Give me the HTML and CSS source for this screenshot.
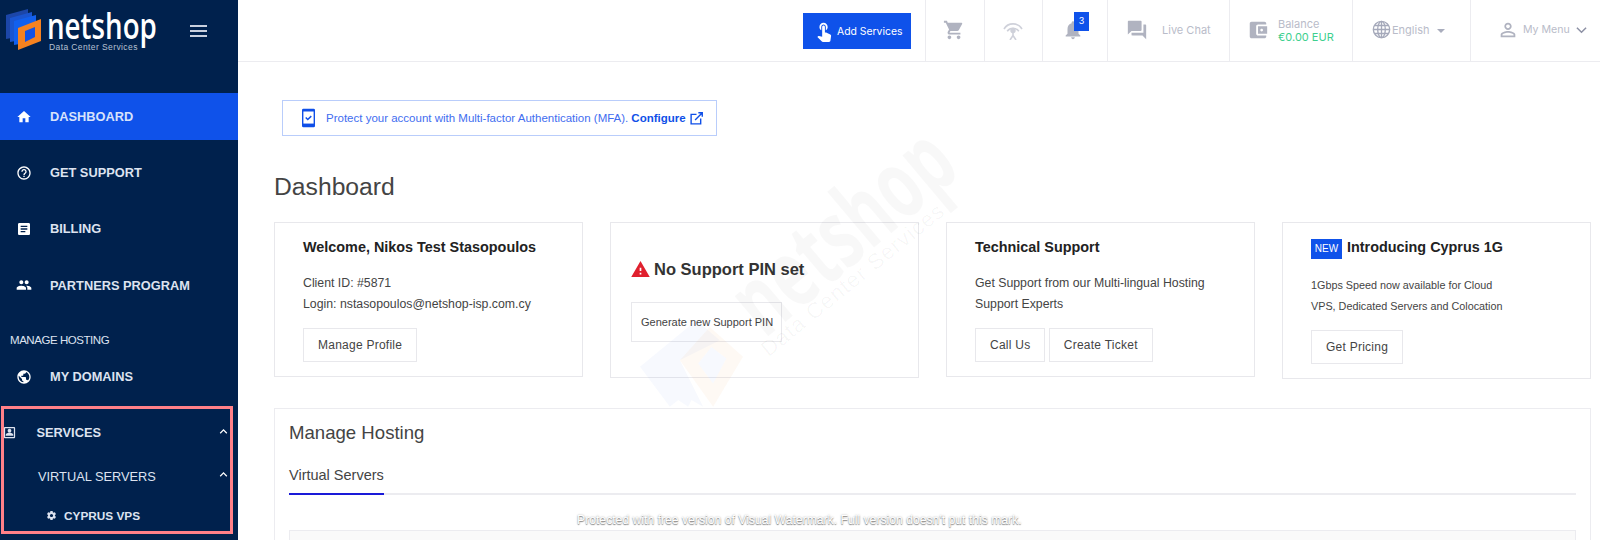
FILE: index.html
```html
<!DOCTYPE html>
<html lang="en">
<head>
    <meta charset="UTF-8">
    <meta name="viewport" content="width=device-width, initial-scale=1.0">
    <title>Dashboard</title>
    <link rel="stylesheet" href="styles.css">
</head>
<body>
    <div class="app">
        <aside class="sidebar">
            <div class="brand">
                <div class="logo">
                    <svg class="logo-mark" viewBox="0 0 36 42" width="36" height="42">
                        <polygon points="0,6 22,0 22,26 0,30" fill="#1c46a8"/>
                        <polygon points="4,9 26,3 26,29 4,33" fill="#1a55d0"/>
                        <polygon points="8,12 30,6 30,32 8,36" fill="#1260ee"/>
                        <polygon points="12,19 35,10 35,32 12,41" fill="#f58220"/>
                        <polygon points="19,22 29,18 29,28 19,33" fill="#1052e6"/>
                    </svg>
                    <div class="logo-text">
                        <div class="logo-name">netshop</div>
                        <div class="logo-sub">Data Center Services</div>
                    </div>
                </div>
                <div class="burger"><span></span><span></span><span></span></div>
            </div>
            <nav class="nav">
                <a class="nav-item active">
                    <svg class="nav-icon" viewBox="0 0 24 24"><path d="M10 20v-6h4v6h5v-8h3L12 3 2 12h3v8z"/></svg>DASHBOARD
                </a>
                <a class="nav-item">
                    <svg class="nav-icon" viewBox="0 0 24 24"><path d="M11 18h2v-2h-2v2zm1-16C6.48 2 2 6.48 2 12s4.48 10 10 10 10-4.48 10-10S17.52 2 12 2zm0 18c-4.41 0-8-3.59-8-8s3.59-8 8-8 8 3.59 8 8-3.59 8-8 8zm0-14c-2.21 0-4 1.79-4 4h2c0-1.1.9-2 2-2s2 .9 2 2c0 2-3 1.75-3 5h2c0-2.25 3-2.5 3-5 0-2.21-1.79-4-4-4z"/></svg>GET SUPPORT
                </a>
                <a class="nav-item">
                    <svg class="nav-icon" viewBox="0 0 24 24"><path d="M19 3H5c-1.1 0-2 .9-2 2v14c0 1.1.9 2 2 2h14c1.1 0 2-.9 2-2V5c0-1.1-.9-2-2-2zm-5 14H7v-2h7v2zm3-4H7v-2h10v2zm0-4H7V7h10v2z"/></svg>BILLING
                </a>
                <a class="nav-item">
                    <svg class="nav-icon" viewBox="0 0 24 24"><path d="M16 11c1.66 0 2.99-1.34 2.99-3S17.66 5 16 5c-1.66 0-3 1.34-3 3s1.34 3 3 3zm-8 0c1.66 0 2.99-1.34 2.99-3S9.66 5 8 5C6.34 5 5 6.34 5 8s1.34 3 3 3zm0 2c-2.33 0-7 1.17-7 3.5V19h14v-2.5c0-2.33-4.67-3.5-7-3.5zm8 0c-.29 0-.62.02-.97.05 1.16.84 1.97 1.97 1.97 3.45V19h6v-2.5c0-2.33-4.67-3.5-7-3.5z"/></svg>PARTNERS PROGRAM
                </a>
                <div class="nav-label">MANAGE HOSTING</div>
                <a class="nav-item nav-item-short">
                    <svg class="nav-icon" viewBox="0 0 24 24"><path d="M12 2C6.48 2 2 6.48 2 12s4.48 10 10 10 10-4.48 10-10S17.52 2 12 2zm-1 17.93c-3.95-.49-7-3.85-7-7.93 0-.62.08-1.21.21-1.79L9 15v1c0 1.1.9 2 2 2v1.93zm6.9-2.54c-.26-.81-1-1.39-1.9-1.39h-1v-3c0-.55-.45-1-1-1H8v-2h2c.55 0 1-.45 1-1V7h2c1.1 0 2-.9 2-2v-.41c2.93 1.19 5 4.06 5 7.41 0 2.08-.8 3.97-2.1 5.39z"/></svg>MY DOMAINS
                </a>
                <div class="nav-box">
                    <a class="box-row box-services">
                        <svg class="box-icon" viewBox="0 0 24 24"><path d="M19 3H5c-1.1 0-2 .9-2 2v14c0 1.1.9 2 2 2h14c1.1 0 2-.9 2-2V5c0-1.1-.9-2-2-2zm0 16H5V5h14v14zM12 12c1.65 0 3-1.35 3-3s-1.35-3-3-3-3 1.35-3 3 1.35 3 3 3zM6 17h12v-1.5c0-2-4-3-6-3s-6 1-6 3z"/></svg>
                        <span class="box-text">SERVICES</span>
                        <svg class="chevron" viewBox="0 0 24 24"><path d="M12 8l-6 6 1.41 1.41L12 10.83l4.59 4.58L18 14z"/></svg>
                    </a>
                    <a class="box-row box-virtual">
                        <span class="box-text">VIRTUAL SERVERS</span>
                        <svg class="chevron" viewBox="0 0 24 24"><path d="M12 8l-6 6 1.41 1.41L12 10.83l4.59 4.58L18 14z"/></svg>
                    </a>
                    <a class="box-row box-cyprus">
                        <svg class="gear" viewBox="0 0 24 24"><path d="M19.43 12.98c.04-.32.07-.64.07-.98s-.03-.66-.07-.98l2.11-1.65c.19-.15.24-.42.12-.64l-2-3.46c-.12-.22-.39-.3-.61-.22l-2.49 1c-.52-.4-1.08-.73-1.69-.98l-.38-2.65C14.46 2.18 14.25 2 14 2h-4c-.25 0-.46.18-.49.42l-.38 2.65c-.61.25-1.17.59-1.69.98l-2.49-1c-.23-.09-.49 0-.61.22l-2 3.46c-.13.22-.07.49.12.64l2.11 1.65c-.04.32-.07.65-.07.98s.03.66.07.98l-2.11 1.65c-.19.15-.24.42-.12.64l2 3.46c.12.22.39.3.61.22l2.49-1c.52.4 1.08.73 1.69.98l.38 2.65c.03.24.24.42.49.42h4c.25 0 .46-.18.49-.42l.38-2.65c.61-.25 1.17-.59 1.69-.98l2.49 1c.23.09.49 0 .61-.22l2-3.46c.12-.22.07-.49-.12-.64l-2.11-1.65zM12 15.5c-1.93 0-3.5-1.57-3.5-3.5s1.57-3.5 3.5-3.5 3.5 1.57 3.5 3.5-1.57 3.5-3.5 3.5z"/></svg>
                        <span>CYPRUS VPS</span>
                    </a>
                </div>
            </nav>
        </aside>

        <div class="main">
            <header class="topbar">
                <a class="btn-add">
                    <svg class="add-icon" viewBox="0 0 24 24"><path d="M9 11.24V7.5C9 6.12 10.12 5 11.5 5S14 6.12 14 7.5v3.74c1.21-.81 2-2.18 2-3.74C16 5.01 13.99 3 11.5 3S7 5.01 7 7.5c0 1.56.79 2.93 2 3.74zm9.84 4.63l-4.54-2.26c-.17-.07-.35-.11-.54-.11H13v-6c0-.83-.67-1.5-1.5-1.5S10 6.67 10 7.5v10.74l-3.43-.72c-.08-.01-.15-.03-.24-.03-.31 0-.59.13-.79.33l-.79.8 4.94 4.94c.27.27.65.44 1.06.44h6.79c.75 0 1.33-.55 1.44-1.28l.75-5.27c.01-.07.02-.14.02-.2 0-.62-.38-1.16-.91-1.38z"/></svg>
                    Add Services
                </a>
                <div class="top-item top-cart">
                    <svg class="top-icon" viewBox="0 0 24 24"><path d="M7 18c-1.1 0-1.99.9-1.99 2S5.9 22 7 22s2-.9 2-2-.9-2-2-2zM1 2v2h2l3.6 7.59-1.35 2.45c-.16.28-.25.61-.25.96 0 1.1.9 2 2 2h12v-2H7.42c-.14 0-.25-.11-.25-.25l.03-.12.9-1.63h7.45c.75 0 1.41-.41 1.75-1.03l3.58-6.49c.08-.14.12-.31.12-.48 0-.55-.45-1-1-1H5.21l-.94-2H1zm16 16c-1.1 0-1.99.9-1.99 2s.89 2 1.99 2 2-.9 2-2-.9-2-2-2z"/></svg>
                </div>
                <div class="top-item top-signal">
                    <svg class="signal-icon" viewBox="0 0 20 20" fill="none" stroke="#cfd1da" stroke-width="1.6">
                        <path d="M1 9A10.5 10.5 0 0 1 19 9"/>
                        <path d="M4.2 11.2A7.2 7.2 0 0 1 15.8 11.2"/>
                        <circle cx="10" cy="10.5" r="1.9" fill="#cfd1da"/>
                        <path d="M10 12.5v3M7 20l3-4.5 3 4.5"/>
                    </svg>
                </div>
                <div class="top-item top-bell">
                    <svg class="top-icon" viewBox="0 0 24 24"><path d="M12 22c1.1 0 2-.9 2-2h-4c0 1.1.89 2 2 2zm6-6v-5c0-3.07-1.64-5.64-4.5-6.32V4c0-.83-.67-1.5-1.5-1.5s-1.5.67-1.5 1.5v.68C7.63 5.36 6 7.92 6 11v5l-2 2v1h16v-1l-2-2z"/></svg>
                    <span class="badge">3</span>
                </div>
                <div class="top-item top-chat">
                    <svg class="top-icon" viewBox="0 0 24 24"><path d="M21 6h-2v9H6v2c0 .55.45 1 1 1h11l4 4V7c0-.55-.45-1-1-1zm-4 6V3c0-.55-.45-1-1-1H3c-.55 0-1 .45-1 1v14l4-4h10c.55 0 1-.45 1-1z"/></svg>
                    <span class="top-text">Live Chat</span>
                </div>
                <div class="top-item top-balance">
                    <svg class="top-icon" viewBox="0 0 24 24"><path d="M21 18v1c0 1.1-.9 2-2 2H5c-1.11 0-2-.9-2-2V5c0-1.1.89-2 2-2h14c1.1 0 2 .9 2 2v1h-9c-1.11 0-2 .9-2 2v8c0 1.1.89 2 2 2h9zm-9-2h10V8H12v8zm4-2.5c-.83 0-1.5-.67-1.5-1.5s.67-1.5 1.5-1.5 1.5.67 1.5 1.5-.67 1.5-1.5 1.5z"/></svg>
                    <div class="balance-text">
                        <div class="top-text">Balance</div>
                        <div class="balance-value">€0.00 EUR</div>
                    </div>
                </div>
                <div class="top-item top-lang">
                    <svg class="globe" viewBox="0 0 20 20" fill="none" stroke="#a5a9ba" stroke-width="1.4">
                        <circle cx="10" cy="10" r="8.6"/>
                        <ellipse cx="10" cy="10" rx="4" ry="8.6"/>
                        <path d="M10 1.4v17.2M1.4 10h17.2M2.6 5.8h14.8M2.6 14.2h14.8"/>
                    </svg>
                    <span class="top-text">English</span>
                    <span class="caret"></span>
                </div>
                <div class="top-item top-menu">
                    <svg class="top-icon" viewBox="0 0 24 24"><path d="M12 5.9c1.16 0 2.1.94 2.1 2.1s-.94 2.1-2.1 2.1S9.9 9.16 9.9 8s.94-2.1 2.1-2.1m0 9c2.97 0 6.1 1.46 6.1 2.1v1.1H5.9V17c0-.64 3.13-2.1 6.1-2.1M12 4C9.79 4 8 5.79 8 8s1.79 4 4 4 4-1.79 4-4-1.79-4-4-4zm0 9c-2.67 0-8 1.34-8 4v3h16v-3c0-2.66-5.33-4-8-4z"/></svg>
                    <span class="top-text">My Menu</span>
                    <svg class="menu-chevron" viewBox="0 0 12 8" fill="none" stroke="#8d91a5" stroke-width="1.6"><path d="M1 1.5l5 5 5-5"/></svg>
                </div>
            </header>

            <div class="content">
                <div class="alert">
                    <svg class="alert-icon" viewBox="0 0 14 20">
                        <rect width="14" height="20" rx="1.5" fill="#0f4fe8"/>
                        <rect x="1.5" y="3" width="11" height="13" fill="#fff"/>
                        <path d="M4 9.5l2.2 2.2L10 8" fill="none" stroke="#0f4fe8" stroke-width="1.6"/>
                    </svg>
                    <span>Protect your account with Multi-factor Authentication (MFA).</span>
                    <b class="alert-link">Configure</b>
                    <svg class="ext-icon" viewBox="0 0 14 14" fill="none" stroke="#0f4fe8" stroke-width="1.5">
                        <path d="M7 2.5H1.2v10.3h10.3V7"/>
                        <path d="M5.5 8.5L13 1M9 .8h4.2V5"/>
                    </svg>
                </div>

                <h1 class="page-title">Dashboard</h1>

                <div class="cards">
                    <div class="card">
                        <h3 class="card-title">Welcome, Nikos Test Stasopoulos</h3>
                        <p class="card-text">Client ID: #5871<br>Login: nstasopoulos@netshop-isp.com.cy</p>
                        <a class="btn">Manage Profile</a>
                    </div>
                    <div class="card card-pin">
                        <h3 class="card-title pin-title">
                            <svg class="warn-icon" viewBox="1 2 22 19"><path d="M1 21h22L12 2 1 21zm12-3h-2v-2h2v2zm0-4h-2v-4h2v4z"/></svg>
                            No Support PIN set
                        </h3>
                        <a class="btn btn-pin">Generate new Support PIN</a>
                    </div>
                    <div class="card">
                        <h3 class="card-title">Technical Support</h3>
                        <p class="card-text">Get Support from our Multi-lingual Hosting<br>Support Experts</p>
                        <a class="btn">Call Us</a>
                        <a class="btn">Create Ticket</a>
                    </div>
                    <div class="card">
                        <h3 class="card-title"><span class="tag">NEW</span> Introducing Cyprus 1G</h3>
                        <p class="card-text card-text-small">1Gbps Speed now available for Cloud<br>VPS, Dedicated Servers and Colocation</p>
                        <a class="btn">Get Pricing</a>
                    </div>
                </div>

                <section class="panel">
                    <h2 class="panel-title">Manage Hosting</h2>
                    <div class="tabs"><span class="tab">Virtual Servers</span></div>
                    <div class="panel-box"></div>
                </section>
            </div>

            <div class="wm">
                <div class="wm-name">netshop</div>
                <div class="wm-sub">Data Center Services</div>
                <svg class="wm-logo" viewBox="60 600 310 260">
                    <polygon points="60,740 230,600 300,660 180,720 250,860 215,840 205,860 175,840 150,860" fill="#3a6cf0" opacity=".045"/>
                    <path d="M180 720L270 620 370 710 280 860zM235 730L280 790 320 715 275 680z" fill="#f58220" fill-rule="evenodd" opacity=".05"/>
                    <polygon points="235,730 275,680 320,715 280,790" fill="#3a6cf0" opacity=".04"/>
                </svg>
            </div>
            <div class="free-mark">Protected with free version of Visual Watermark. Full version doesn't put this mark.</div>
        </div>
    </div>
</body>
</html>
```

FILE: styles.css
```css
* {box-sizing: border-box;}
body {
    margin: 0;
    padding: 0;
    font-family: "Liberation Sans", Arial, sans-serif;
    font-size: 12px;
    color: #333;
    background: #fff;
}
.app {
    display: flex;
    height: 540px;
    overflow: hidden;
}

/* sidebar */
.sidebar {
    width: 238px;
    flex: none;
    background-color: #00214d;
}
.brand {
    height: 93px;
    display: flex;
    align-items: flex-start;
    padding: 9px 0 0 6px;
}
.logo {
    display: flex;
    width: 184px;
}
.logo-mark {
    flex: none;
}
.logo-text {
    margin-left: 5px;
}
.logo-name {
    font-family: "Open Sans", sans-serif;
    font-size: 36px;
    font-weight: 600;
    line-height: 34px;
    color: #fff;
    transform: scaleX(.77);
    transform-origin: left;
}
.logo-sub {
    font-size: 8.5px;
    line-height: 8px;
    letter-spacing: .4px;
    color: #b7c2d3;
    margin-left: 2px;
}
.burger {
    width: 17px;
    margin-top: 16px;
}
.burger span {
    display: block;
    height: 2px;
    background-color: #c9d0de;
    margin-bottom: 3px;
}
.nav-item {
    display: flex;
    align-items: center;
    height: 47px;
    margin-bottom: 9.2px;
    padding-left: 16px;
    font-size: 12.8px;
    font-weight: bold;
    color: #dde3f0;
}
.nav-item.active {
    background-color: #0f52ea;
    color: #d8e2fb;
}
.nav-item-short {
    height: 40px;
    margin-bottom: 9px;
}
.nav-icon {
    width: 16px;
    height: 16px;
    fill: #fff;
    margin-right: 18px;
}
.nav-label {
    height: 22px;
    line-height: 22px;
    margin: 20px 0 6px 10px;
    font-size: 11.5px;
    letter-spacing: -.45px;
    color: #dde3f0;
}
.nav-box {
    width: 232px;
    height: 128px;
    margin-left: 1px;
    border: 3px solid #ff8088;
    color: #dde3f0;
}
.box-row {
    display: flex;
    align-items: center;
}
.box-services {
    height: 42px;
    margin-top: 3px;
    font-size: 12.8px;
    font-weight: bold;
}
.box-icon {
    width: 15px;
    height: 15px;
    fill: #dde3f0;
    margin: 0 19.5px 0 -2px;
}
.box-text {
    flex: 1;
}
.chevron {
    width: 15px;
    height: 15px;
    fill: #fff;
    margin-right: -1px;
    margin-top: -3px;
}
.box-virtual {
    height: 45px;
    padding-left: 34px;
    font-size: 12.8px;
}
.box-cyprus {
    height: 34px;
    padding-left: 42px;
    font-size: 11.8px;
    font-weight: bold;
}
.gear {
    width: 11px;
    height: 11px;
    fill: #dde3f0;
    margin-right: 7px;
}

/* top bar */
.main {
    flex: 1;
    position: relative;
    min-width: 0;
}
.topbar {
    display: flex;
    justify-content: flex-end;
    height: 62px;
    border-bottom: 1px solid #ececf0;
}
.btn-add {
    display: flex;
    align-items: center;
    align-self: flex-start;
    width: 108px;
    height: 36px;
    margin: 13px 14px 0 0;
    padding-left: 10px;
    background-color: #0f52ea;
    font-family: Inter, sans-serif;
    font-size: 10.4px;
    color: #fff;
}
.add-icon {
    width: 22px;
    height: 22px;
    fill: #fff;
    margin-right: 2px;
}
.top-item {
    position: relative;
    display: flex;
    align-items: center;
    padding-bottom: 2px;
    border-left: 1px solid #ececf0;
    font-family: Inter, sans-serif;
    font-size: 11px;
}
.top-icon {
    width: 22px;
    height: 22px;
    fill: #b0b3c0;
    flex: none;
}
.top-text {
    color: #b9bcc9;
}
.top-cart {
    width: 59px;
    padding-left: 17px;
}
.top-signal {
    width: 58px;
    padding-left: 18px;
}
.signal-icon {
    width: 20px;
    height: 20px;
}
.top-bell {
    width: 65px;
    padding-left: 19px;
}
.badge {
    position: absolute;
    left: 31px;
    top: 12px;
    width: 15px;
    height: 19px;
    line-height: 17px;
    text-align: center;
    background-color: #0f52ea;
    color: #fff;
    font-size: 9px;
}
.top-chat {
    width: 122px;
    padding-left: 18px;
}
.top-chat .top-text {
    margin-left: 14px;
}
.top-balance {
    width: 123px;
    padding-left: 17px;
}
.balance-text {
    margin: 2px 0 0 9px;
    line-height: 13px;
}
.balance-value {
    color: #3ecf8e;
}
.top-lang {
    width: 118px;
    padding-left: 19px;
}
.globe {
    width: 19px;
    height: 19px;
    flex: none;
    margin-right: 1px;
}
.caret {
    margin: 2px 0 0 7px;
    border-top: 4px solid #a9adbd;
    border-left: 4px solid transparent;
    border-right: 4px solid transparent;
}
.top-menu {
    width: 130px;
    padding-left: 26px;
    font-size: 10.6px;
}
.top-menu .top-text {
    margin-left: 4px;
}
.menu-chevron {
    width: 11px;
    height: 8px;
    margin-left: 6px;
}

/* content */
.content {
    padding: 38px 9px 0 36px;
}
.alert {
    display: flex;
    align-items: center;
    width: 435px;
    height: 36px;
    margin-left: 8px;
    padding-left: 19px;
    border: 1px solid #b9cdfb;
    font-size: 11.5px;
    color: #3f6df0;
}
.alert-icon {
    width: 13px;
    height: 20px;
    margin-right: 11px;
}
.alert-link {
    margin-left: 3px;
    color: #0f4fe8;
}
.ext-icon {
    width: 13px;
    height: 13px;
    margin-left: 4px;
}
.page-title {
    margin: 36px 0 20px;
    font-size: 24.7px;
    line-height: 30px;
    font-weight: normal;
    color: #444;
}
.cards {
    display: grid;
    grid-template-columns: repeat(4, 1fr);
    column-gap: 27px;
    align-items: start;
}
.card {
    border: 1px solid #e8e8ec;
    padding: 13px 28px 14px;
}
.card-title {
    margin: 0 0 15px;
    font-size: 14.4px;
    line-height: 22px;
    color: #222;
}
.card-text {
    margin: 0 0 13px;
    line-height: 21px;
    font-size: 12.3px;
    color: #444;
}
.card-text-small {
    font-size: 10.8px;
    margin-top: 16px;
}
.btn {
    display: inline-block;
    vertical-align: top;
    height: 34px;
    line-height: 32px;
    padding: 0 14px;
    border: 1px solid #e8e8ec;
    font-size: 12px;
    letter-spacing: .25px;
    color: #444;
}
.card-pin {
    padding: 35px 20px;
}
.pin-title {
    display: flex;
    align-items: center;
    margin-bottom: 22px;
    font-size: 16.5px;
    color: #333;
}
.warn-icon {
    width: 19px;
    height: 16px;
    fill: #e0202e;
    margin-right: 4px;
}
.btn-pin {
    height: 40px;
    line-height: 38px;
    padding: 0 8px 0 9px;
    font-size: 11px;
    letter-spacing: 0;
}
.tag {
    display: inline-block;
    width: 31px;
    height: 20px;
    line-height: 20px;
    margin: 3px 1px 0 0;
    text-align: center;
    vertical-align: top;
    background-color: #0f52ea;
    color: #fff;
    font-size: 10px;
    font-weight: normal;
}
.panel {
    margin-top: 29px;
    height: 200px;
    padding: 12px 14px;
    border: 1px solid #ececf0;
}
.panel-title {
    margin: 0 0 13px;
    font-size: 18.6px;
    line-height: 24px;
    font-weight: normal;
    color: #444;
}
.tabs {
    border-bottom: 2px solid #ececf0;
}
.tab {
    display: inline-block;
    height: 37px;
    line-height: 34px;
    margin-bottom: -2px;
    border-bottom: 2px solid #1a1ad8;
    font-size: 14.5px;
    color: #444;
}
.panel-box {
    height: 60px;
    margin-top: 35px;
    background-color: #fafafa;
    border: 1px solid #ececf0;
}

/* watermarks drawn over the page */
.wm {
    position: absolute;
    left: 0;
    top: 0;
    width: 100%;
    height: 100%;
    pointer-events: none;
}
.wm-name {
    position: absolute;
    left: 402px;
    top: 178px;
    width: 400px;
    font-family: "Open Sans", sans-serif;
    font-size: 96px;
    font-weight: bold;
    line-height: 100px;
    text-align: center;
    color: rgba(0, 0, 0, .028);
    transform: rotate(-40deg) scaleX(.66);
}
.wm-sub {
    position: absolute;
    left: 465px;
    top: 266px;
    width: 300px;
    font-size: 22px;
    line-height: 28px;
    letter-spacing: 1px;
    text-align: center;
    color: rgba(0, 0, 0, .035);
    transform: rotate(-39deg);
}
.wm-logo {
    position: absolute;
    left: 402px;
    top: 320px;
    width: 103px;
    height: 87px;
}
.free-mark {
    position: absolute;
    left: 339px;
    top: 513px;
    font-size: 12.2px;
    line-height: 14px;
    color: #fff;
    text-shadow: 0 1px 1px #888, 0 0 2px #aaa;
    white-space: nowrap;
}
```
